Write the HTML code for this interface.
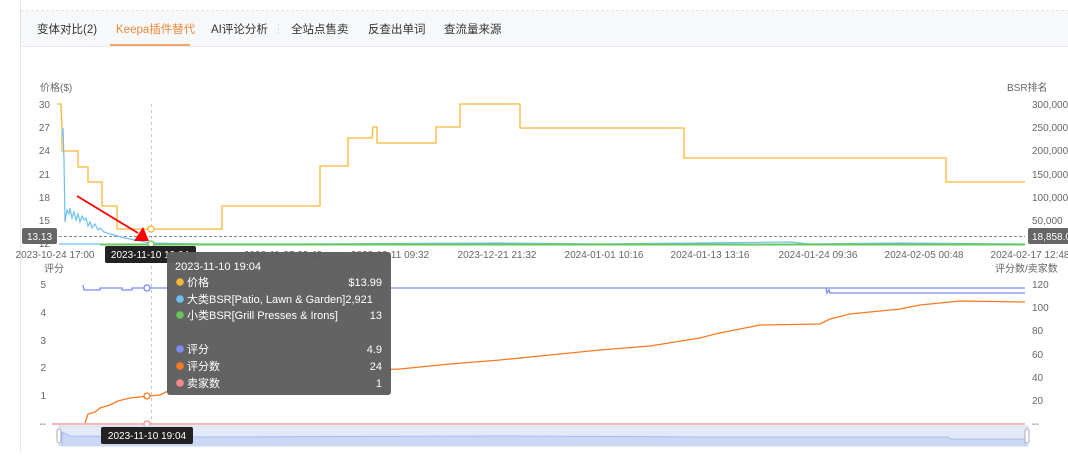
<!DOCTYPE html>
<html><head><meta charset="utf-8"><style>
body{margin:0;width:1068px;height:452px;overflow:hidden;background:#fff;font-family:"Liberation Sans","Noto Sans CJK SC",sans-serif;}
svg text{font-family:"Liberation Sans","Noto Sans CJK SC",sans-serif;}
</style></head><body>
<svg width="1068" height="452" xmlns="http://www.w3.org/2000/svg">
<line x1="20.5" y1="0" x2="20.5" y2="452" stroke="#e4e6eb"/>
<rect x="21" y="11" width="1047" height="35" fill="#f7f8fa"/>
<line x1="21" y1="10.5" x2="1068" y2="10.5" stroke="#e2e4e8" stroke-dasharray="3,2"/>
<line x1="21" y1="46.5" x2="1068" y2="46.5" stroke="#e6e8ec"/>
<g font-size="11.5" fill="#333">
<text x="37" y="33">变体对比(2)</text>
<text x="116" y="33" fill="#f08a3a">Keepa插件替代</text>
<text x="211" y="33">AI评论分析</text>
<text x="291" y="33">全站点售卖</text>
<text x="368" y="33">反查出单词</text>
<text x="444" y="33">查流量来源</text>
</g>
<line x1="110" y1="45" x2="190" y2="45" stroke="#f08a3a" stroke-width="1.5"/>
<line x1="278.5" y1="24" x2="278.5" y2="34" stroke="#ddd" stroke-dasharray="2,2"/>
<g font-size="10" fill="#666">
<text x="40" y="91">价格($)</text>
<text x="1007" y="91">BSR排名</text>
<g text-anchor="end">
<text x="50" y="108">30</text><text x="50" y="131">27</text><text x="50" y="154">24</text><text x="50" y="178">21</text><text x="50" y="201">18</text><text x="50" y="224">15</text><text x="50" y="247">12</text>
</g>
<text x="1032" y="108">300,000</text><text x="1032" y="131">250,000</text><text x="1032" y="154">200,000</text><text x="1032" y="178">150,000</text><text x="1032" y="201">100,000</text><text x="1032" y="224">50,000</text>
<g text-anchor="middle">
<text x="55" y="258">2023-10-24 17:00</text>
<text x="283" y="258">2023-11-27 23:42</text>
<text x="390" y="258">2023-12-11 09:32</text>
<text x="497" y="258">2023-12-21 21:32</text>
<text x="604" y="258">2024-01-01 10:16</text>
<text x="710" y="258">2024-01-13 13:16</text>
<text x="818" y="258">2024-01-24 09:36</text>
<text x="924" y="258">2024-02-05 00:48</text>
<text x="1030" y="258">2024-02-17 12:48</text>
</g>
<text x="44" y="272">评分</text>
<text x="995" y="272">评分数/卖家数</text>
<g text-anchor="end">
<text x="46" y="288">5</text><text x="46" y="316">4</text><text x="46" y="344">3</text><text x="46" y="371">2</text><text x="46" y="399">1</text><text x="46" y="427">--</text>
</g>
<text x="1032" y="288">120</text><text x="1032" y="311">100</text><text x="1032" y="334">80</text><text x="1032" y="358">60</text><text x="1032" y="381">40</text><text x="1032" y="404">20</text><text x="1032" y="427">--</text>
</g>
<line x1="151.5" y1="104" x2="151.5" y2="424" stroke="#ccc" stroke-dasharray="3,3"/>
<line x1="59" y1="236.5" x2="1025" y2="236.5" stroke="#888" stroke-dasharray="3,2"/>
<polyline fill="none" stroke="#f7b733" stroke-width="1.3" points="57,104 61,104 62,128 62,151 78,151 78,167 88,167 88,182 102,182 102,206 117,206 117,229 222,229 222,206 320,206 320,166 348,166 348,138 372,138 373,127 377,127 377,143 436,143 436,127 460,127 460,104 520,104 520,128 684,128 684,158 946,158 946,182 1025,182"/>
<polyline fill="none" stroke="#6ec1f5" stroke-width="1.2" points="62,135 63,128 64,160 65,222 67,210 69,214 70,208 72,218 74,212 76,220 78,214 80,222 82,216 84,220 86,218 88,226 90,222 92,228 95,224 98,230 100,228 104,232 110,234 118,236 125,238 135,240 150,243 200,244 300,244 500,243 600,244 700,243 790,242 810,244 900,243 1025,244"/>
<polyline fill="none" stroke="#66c75a" stroke-width="2" points="100,244.5 1025,244.5"/>
<line x1="59" y1="244" x2="100" y2="244" stroke="#6ec1f5" stroke-width="1.2"/>
<circle cx="151" cy="229" r="3" fill="#fff" stroke="#f7b733" stroke-width="1.3"/>
<circle cx="151" cy="244" r="3" fill="#fff" stroke="#66c75a" stroke-width="1.3"/>
<line x1="77" y1="196" x2="138" y2="233" stroke="#f00" stroke-width="1.8"/>
<polygon points="149,241 134,241 143,227" fill="#f00"/>
<rect x="22" y="228" width="35" height="16" rx="2" fill="#666"/>
<text x="39.5" y="240" font-size="10" fill="#fff" text-anchor="middle">13.13</text>
<rect x="1028" y="228" width="45" height="16" rx="2" fill="#666"/>
<text x="1032" y="240" font-size="10" fill="#fff">18,858.0</text>
<rect x="105" y="246" width="91" height="17" rx="2" fill="#222"/>
<text x="150" y="258" font-size="10" fill="#fff" text-anchor="middle">2023-11-10 19:04</text>
<polyline fill="none" stroke="#7b8cf5" stroke-width="1.3" points="83,285 84,290 100,290 100,288 122,288 122,290 132,290 132,288 1025,288"/>
<polyline fill="none" stroke="#7b8cf5" stroke-width="1.3" points="826,288 827,293 829,290 830,293 1025,293"/>
<polyline fill="none" stroke="#f97a22" stroke-width="1.3" points="85,423 88,414 95,412 100,408 110,405 118,401 130,398 148,396 160,395 168,391 175,389 200,385 260,380 300,375 350,371 400,369 450,364 500,360 550,355 600,350 650,346 700,338 715,334 760,325 820,324 830,319 850,314 900,309 920,305 960,301 1025,302"/>
<line x1="52" y1="424" x2="1025" y2="424" stroke="#f58a8a" stroke-width="1.3"/>
<circle cx="147" cy="288" r="3" fill="#fff" stroke="#7b8cf5" stroke-width="1.3"/>
<circle cx="147" cy="396" r="3" fill="#fff" stroke="#f97a22" stroke-width="1.3"/>
<circle cx="147" cy="424" r="3" fill="#fff" stroke="#f58a8a" stroke-width="1.3"/>
<rect x="59" y="426" width="969" height="20" fill="#e2eafa" stroke="#d0d8ea"/>
<polyline fill="#cbd8f5" stroke="#a8bdf0" stroke-width="1" points="62,446 62,432 70,436 200,437 500,436 700,437 948,437 950,439 1025,439 1025,446"/>
<rect x="57" y="429" width="4" height="14" rx="2" fill="#fff" stroke="#aab"/>
<rect x="1025" y="429" width="4" height="14" rx="2" fill="#fff" stroke="#aab"/>
<rect x="101" y="427" width="92" height="17" rx="2" fill="#222"/>
<text x="147" y="439" font-size="10" fill="#fff" text-anchor="middle">2023-11-10 19:04</text>
<rect x="167" y="252" width="224" height="143" rx="3" fill="#5e5e5e" fill-opacity="0.97"/>
<g font-size="11" fill="#fff">
<text x="175" y="270">2023-11-10 19:04</text>
<circle cx="180" cy="282" r="3.8" fill="#f7b733"/><text x="187" y="286">价格</text><text x="382" y="286" text-anchor="end">$13.99</text>
<circle cx="180" cy="299" r="3.8" fill="#6ec1f5"/><text x="187" y="303">大类BSR[Patio, Lawn &amp; Garden]2,921</text>
<circle cx="180" cy="315" r="3.8" fill="#66c75a"/><text x="187" y="319">小类BSR[Grill Presses &amp; Irons]</text><text x="382" y="319" text-anchor="end">13</text>
<circle cx="180" cy="349" r="3.8" fill="#7b8cf5"/><text x="187" y="353">评分</text><text x="382" y="353" text-anchor="end">4.9</text>
<circle cx="180" cy="366" r="3.8" fill="#f97a22"/><text x="187" y="370">评分数</text><text x="382" y="370" text-anchor="end">24</text>
<circle cx="180" cy="383" r="3.8" fill="#f58a8a"/><text x="187" y="387">卖家数</text><text x="382" y="387" text-anchor="end">1</text>
</g>
</svg>
</body></html>
